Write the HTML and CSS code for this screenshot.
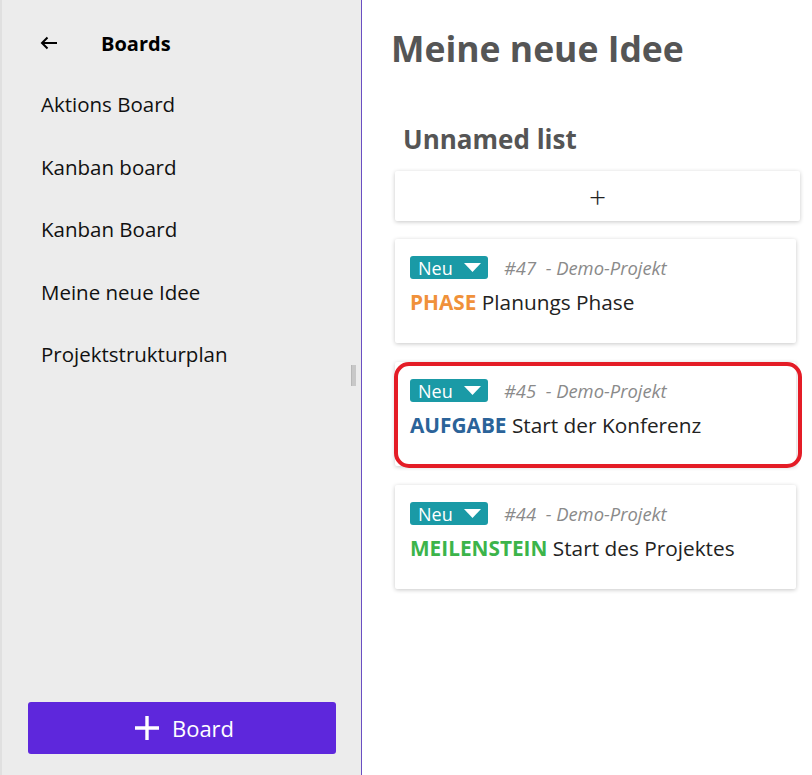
FILE: index.html
```html
<!DOCTYPE html>
<html lang="de">
<head>
<meta charset="utf-8">
<title>Boards</title>
<link rel="stylesheet" href="styles.css">
</head>
<body>
<aside class="sidebar">
  <div class="side-header">
    <svg class="back" width="18" height="14" viewBox="0 0 18 14"><path d="M17 7H2M7.5 1.5L2 7l5.5 5.5" fill="none" stroke="#000" stroke-width="2"/></svg>
    <span class="side-title">Boards</span>
  </div>
  <nav class="board-list">
    <a class="board-item">Aktions Board</a>
    <a class="board-item">Kanban board</a>
    <a class="board-item">Kanban Board</a>
    <a class="board-item">Meine neue Idee</a>
    <a class="board-item">Projektstrukturplan</a>
  </nav>
  <div class="scroll-grip"></div>
  <button class="add-board">
    <svg width="26" height="26" viewBox="0 0 26 26"><path d="M13 1v24M1 13h24" stroke="#fff" stroke-width="3.4"/></svg>
    <span>Board</span>
  </button>
</aside>
<main class="main">
  <h1 class="board-title">Meine neue Idee</h1>
  <section class="list">
    <h2 class="list-title">Unnamed list</h2>
    <div class="add-card">+</div>
    <div class="card">
      <div class="card-meta">
        <span class="status">Neu <svg width="17" height="9" viewBox="0 0 17 9"><path d="M0 0h17L8.5 9z" fill="#fff"/></svg></span>
        <span class="ref">#47 &nbsp;- Demo-Projekt</span>
      </div>
      <div class="card-text"><b class="type phase">PHASE</b> Planungs Phase</div>
    </div>
    <div class="card highlight">
      <div class="card-meta">
        <span class="status">Neu <svg width="17" height="9" viewBox="0 0 17 9"><path d="M0 0h17L8.5 9z" fill="#fff"/></svg></span>
        <span class="ref">#45 &nbsp;- Demo-Projekt</span>
      </div>
      <div class="card-text"><b class="type task">AUFGABE</b> Start der Konferenz</div>
    </div>
    <div class="card">
      <div class="card-meta">
        <span class="status">Neu <svg width="17" height="9" viewBox="0 0 17 9"><path d="M0 0h17L8.5 9z" fill="#fff"/></svg></span>
        <span class="ref">#44 &nbsp;- Demo-Projekt</span>
      </div>
      <div class="card-text"><b class="type milestone">MEILENSTEIN</b> Start des Projektes</div>
    </div>
  </section>
</main>
</body>
</html>
```
FILE: styles.css
```css
* { box-sizing: border-box; }
html, body { margin: 0; height: 100%; }
body {
  display: flex;
  font-family: "Open Sans", "Noto Sans", sans-serif;
  background: #fff;
  color: #222;
  overflow: hidden;
}
.sidebar {
  position: relative;
  width: 362px;
  flex: none;
  height: 100%;
  background: #ececec;
  border-left: 2px solid #e0e0e0;
  border-right: 1px solid #6a4fc2;
  display: flex;
  flex-direction: column;
  padding-top: 12px;
}
.side-header {
  height: 62px;
  display: flex;
  align-items: center;
  padding-left: 38px;
}
.back { margin-right: 43px; }
.side-title {
  font-weight: 700;
  font-size: 20px;
  color: #000;
}
.board-list { display: flex; flex-direction: column; margin-top: -1px; }
.board-item {
  height: 62.5px;
  display: flex;
  align-items: center;
  padding-left: 39px;
  font-size: 20.5px;
  color: #111;
}
.scroll-grip {
  position: absolute;
  left: 349px;
  top: 365px;
  width: 5px;
  height: 21px;
  background: #c8c8c8;
  border-left: 1px solid #b8b8b8;
}
.add-board {
  margin: auto 25px 21px 26px;
  height: 52px;
  border: none;
  border-radius: 3px;
  background: #5e27dc;
  color: #fff;
  font-family: inherit;
  font-size: 22px;
  display: flex;
  align-items: center;
  justify-content: center;
  gap: 12px;
  padding: 0 0 0 4px;
}
.add-board span { line-height: 1; }
.main {
  flex: 1;
  padding-left: 29px;
  padding-top: 20px;
}
.board-title {
  margin: 0;
  font-size: 35.5px;
  font-weight: 700;
  color: #555;
  line-height: 56px;
}
.list {
  width: 410px;
  margin-top: 49px;
  display: flex;
  flex-direction: column;
}
.list-title {
  margin: 0 0 18px 12px;
  font-size: 26px;
  font-weight: 700;
  color: #555;
  line-height: 28px;
}
.add-card {
  width: 405px;
  height: 50px;
  margin-left: 4px;
  background: #fff;
  box-shadow: 0 1px 4px rgba(0,0,0,0.22);
  border-radius: 2px;
  display: flex;
  align-items: center;
  justify-content: center;
  font-size: 30px;
  font-weight: 300;
  color: #222;
  margin-bottom: 18px;
}
.card {
  position: relative;
  width: 401px;
  height: 104px;
  margin-left: 4px;
  margin-bottom: 19px;
  background: #fff;
  box-shadow: 0 1px 4px rgba(0,0,0,0.22);
  border-radius: 2px;
  padding: 17px 15px 0;
}
.card.highlight::after {
  content: "";
  position: absolute;
  top: 0;
  left: -1px;
  right: -6px;
  bottom: -2px;
  border: 4px solid #e41c26;
  border-radius: 15px;
}
.card-meta {
  display: flex;
  align-items: center;
  height: 23px;
}
.status {
  display: inline-flex;
  align-items: center;
  gap: 11px;
  height: 23px;
  width: 78px;
  padding-left: 8px;
  background: #1a9aa6;
  color: #fff;
  border-radius: 3px;
  font-size: 18px;
}
.ref {
  margin-left: 16px;
  font-size: 18.4px;
  font-style: italic;
  color: #8a8a8a;
}
.card-text {
  margin-top: 9px;
  font-size: 20.8px;
  color: #222;
}
.type { font-weight: 700; }
.phase { color: #f0913a; }
.task { color: #2b6399; }
.milestone { color: #3cb44a; }
```
